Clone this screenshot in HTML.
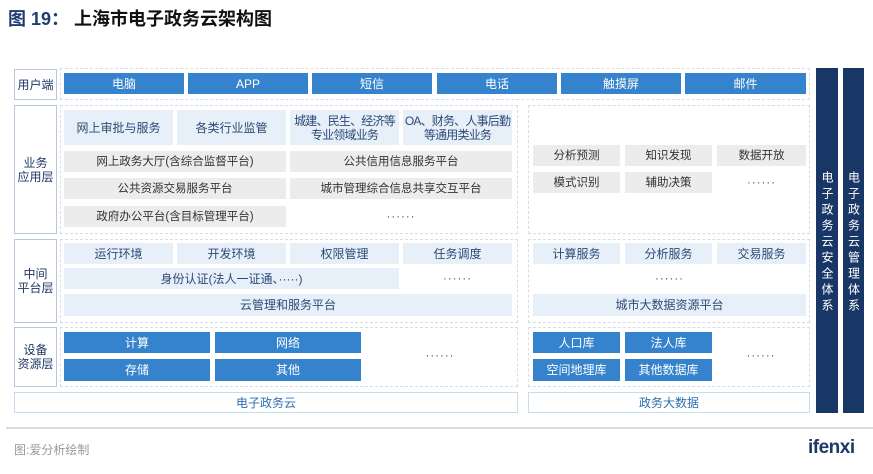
<!DOCTYPE html>
<html><head><meta charset="utf-8"><style>
*{margin:0;padding:0;box-sizing:border-box}
body{width:873px;height:474px;background:#fff;position:relative;overflow:hidden;font-family:"Liberation Sans","Noto Sans CJK SC",sans-serif}
.a{position:absolute;display:flex;align-items:center;justify-content:center;text-align:center;font-size:11.5px;line-height:14px;white-space:nowrap}
.lab{border:1px solid #b7c8dc;color:#1f3864;font-size:12px}
.d{position:absolute;border:1px dashed #d8dde3}
.b{background:#3583cc;color:#fff;font-size:12px}
.l{background:#e7eff8;color:#2c4a76;font-size:12px}
.g{background:#ececec;color:#333}
.dot{color:#555;letter-spacing:1px}
.v{background:#183766;color:#fff;font-size:12px;writing-mode:vertical-rl;letter-spacing:4px;padding-top:4px}
.bot{border:1px solid #c6dcef;color:#2f6eb0;font-size:12px}
</style></head><body>
<div style="position:absolute;left:8px;top:5px;font-size:18px;font-weight:bold;font-family:'Liberation Sans','Noto Sans CJK SC',sans-serif"><span style="color:#1f3d73">图 19：</span> <span style="color:#111">上海市电子政务云架构图</span></div>

<div class="a lab" style="left:14px;top:69px;width:43px;height:31px">用户端</div>
<div class="a lab" style="left:14px;top:105px;width:43px;height:129px">业务<br>应用层</div>
<div class="a lab" style="left:14px;top:239px;width:43px;height:84px">中间<br>平台层</div>
<div class="a lab" style="left:14px;top:327px;width:43px;height:60px">设备<br>资源层</div>

<div class="d" style="left:60px;top:68px;width:750px;height:32px"></div>
<div class="a b" style="left:64px;top:73px;width:120px;height:21px">电脑</div>
<div class="a b" style="left:188px;top:73px;width:120px;height:21px">APP</div>
<div class="a b" style="left:312px;top:73px;width:120px;height:21px">短信</div>
<div class="a b" style="left:437px;top:73px;width:120px;height:21px">电话</div>
<div class="a b" style="left:561px;top:73px;width:120px;height:21px">触摸屏</div>
<div class="a b" style="left:685px;top:73px;width:121px;height:21px">邮件</div>

<div class="d" style="left:60px;top:105px;width:458px;height:129px"></div>
<div class="a l" style="left:64px;top:110px;width:109px;height:35px">网上审批与服务</div>
<div class="a l" style="left:177px;top:110px;width:109px;height:35px">各类行业监管</div>
<div class="a l" style="left:290px;top:110px;width:109px;height:35px;letter-spacing:-0.8px">城建、民生、经济等<br>专业领域业务</div>
<div class="a l" style="left:403px;top:110px;width:109px;height:35px;letter-spacing:-0.8px">OA、财务、人事后勤<br>等通用类业务</div>
<div class="a g" style="left:64px;top:151px;width:222px;height:21px">网上政务大厅(含综合监督平台)</div>
<div class="a g" style="left:290px;top:151px;width:222px;height:21px">公共信用信息服务平台</div>
<div class="a g" style="left:64px;top:178px;width:222px;height:21px">公共资源交易服务平台</div>
<div class="a g" style="left:290px;top:178px;width:222px;height:21px">城市管理综合信息共享交互平台</div>
<div class="a g" style="left:64px;top:206px;width:222px;height:21px">政府办公平台(含目标管理平台)</div>
<div class="a dot" style="left:290px;top:206px;width:222px;height:21px">······</div>

<div class="d" style="left:528px;top:105px;width:282px;height:129px"></div>
<div class="a g" style="left:533px;top:145px;width:87px;height:21px">分析预测</div>
<div class="a g" style="left:625px;top:145px;width:87px;height:21px">知识发现</div>
<div class="a g" style="left:717px;top:145px;width:89px;height:21px">数据开放</div>
<div class="a g" style="left:533px;top:172px;width:87px;height:21px">模式识别</div>
<div class="a g" style="left:625px;top:172px;width:87px;height:21px">辅助决策</div>
<div class="a dot" style="left:717px;top:172px;width:89px;height:21px">······</div>

<div class="d" style="left:60px;top:239px;width:458px;height:84px"></div>
<div class="a l" style="left:64px;top:243px;width:109px;height:21px">运行环境</div>
<div class="a l" style="left:177px;top:243px;width:109px;height:21px">开发环境</div>
<div class="a l" style="left:290px;top:243px;width:109px;height:21px">权限管理</div>
<div class="a l" style="left:403px;top:243px;width:109px;height:21px">任务调度</div>
<div class="a l" style="left:64px;top:268px;width:335px;height:21px">身份认证(法人一证通、·····)</div>
<div class="a dot" style="left:403px;top:268px;width:109px;height:21px">······</div>
<div class="a l" style="left:64px;top:294px;width:448px;height:22px">云管理和服务平台</div>

<div class="d" style="left:528px;top:239px;width:282px;height:84px"></div>
<div class="a l" style="left:533px;top:243px;width:87px;height:21px">计算服务</div>
<div class="a l" style="left:625px;top:243px;width:87px;height:21px">分析服务</div>
<div class="a l" style="left:717px;top:243px;width:89px;height:21px">交易服务</div>
<div class="a dot" style="left:533px;top:268px;width:273px;height:21px">······</div>
<div class="a l" style="left:533px;top:294px;width:273px;height:22px">城市大数据资源平台</div>

<div class="d" style="left:60px;top:327px;width:458px;height:60px"></div>
<div class="a b" style="left:64px;top:332px;width:146px;height:21px">计算</div>
<div class="a b" style="left:215px;top:332px;width:146px;height:21px">网络</div>
<div class="a b" style="left:64px;top:359px;width:146px;height:22px">存储</div>
<div class="a b" style="left:215px;top:359px;width:146px;height:22px">其他</div>
<div class="a dot" style="left:365px;top:345px;width:150px;height:21px">······</div>

<div class="d" style="left:528px;top:327px;width:282px;height:60px"></div>
<div class="a b" style="left:533px;top:332px;width:87px;height:21px">人口库</div>
<div class="a b" style="left:625px;top:332px;width:87px;height:21px">法人库</div>
<div class="a b" style="left:533px;top:359px;width:87px;height:22px">空间地理库</div>
<div class="a b" style="left:625px;top:359px;width:87px;height:22px">其他数据库</div>
<div class="a dot" style="left:715px;top:345px;width:92px;height:21px">······</div>

<div class="a bot" style="left:14px;top:392px;width:504px;height:21px">电子政务云</div>
<div class="a bot" style="left:528px;top:392px;width:282px;height:21px">政务大数据</div>

<div class="a v" style="left:816px;top:68px;width:22px;height:345px">电子政务云安全体系</div>
<div class="a v" style="left:843px;top:68px;width:21px;height:345px">电子政务云管理体系</div>

<div style="position:absolute;left:6px;top:427px;width:867px;height:2px;background:#dcdcdc"></div>
<div style="position:absolute;left:14px;top:441px;font-size:12px;color:#999">图:爱分析绘制</div>
<div style="position:absolute;left:808px;top:437px;font-size:19px;font-weight:bold;color:#1f3864;letter-spacing:-0.5px">ifenxi</div>
</body></html>
